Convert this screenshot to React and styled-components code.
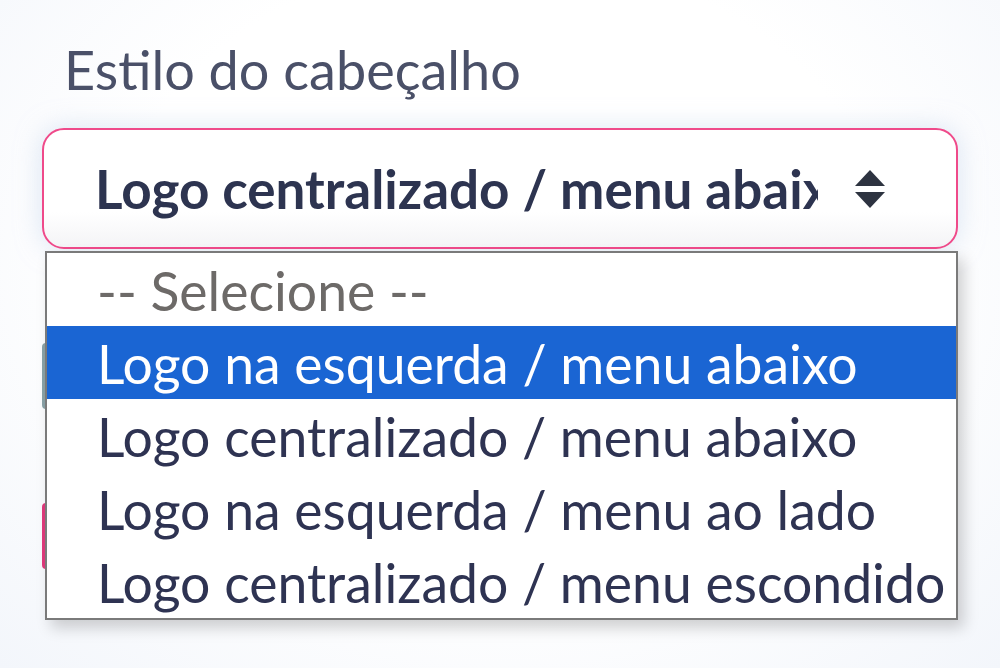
import React from "react";
import styled, { createGlobalStyle } from "styled-components";

const GlobalStyle = createGlobalStyle`
  body {
    margin: 0;
    background: #fbfcfe;
    font-family: Lato, "Open Sans", sans-serif;
  }
`;

const Page = styled.div`
  width: 1000px;
  height: 668px;
  overflow: hidden;
  padding: 30px 42px 0 42px;
  box-sizing: border-box;
  background: radial-gradient(ellipse at 50% 40%, #ffffff 55%, #f3f6fb 100%);
`;

const Label = styled.div`
  font-size: 54px;
  line-height: 80px;
  color: #4a5068;
  padding-left: 22px;
  margin-bottom: 18px;
`;

const SelectWrap = styled.div`
  position: relative;
  width: 916px;
`;

const SelectBox = styled.div`
  height: 121px;
  box-sizing: border-box;
  border: 2px solid #ef4a8a;
  border-radius: 22px;
  background: linear-gradient(#ffffff 70%, #f4f4f6 100%);
  box-shadow: 0 0 26px rgba(195, 212, 235, 0.6);
  display: flex;
  align-items: center;
  padding: 0 70px 0 51px;
  gap: 36px;
`;

const SelectValue = styled.span`
  flex: 1;
  font-size: 53px;
  font-weight: 700;
  color: #2d3450;
  white-space: nowrap;
  overflow: hidden;
`;

const Arrows = styled.svg`
  width: 32px;
  height: 44px;
  flex: none;
`;

const Dropdown = styled.ul`
  position: absolute;
  z-index: 2;
  top: 123px;
  left: 3px;
  width: 913px;
  box-sizing: border-box;
  margin: 0;
  padding: 0;
  list-style: none;
  background: #ffffff;
  border: 2px solid #7a7a7a;
  box-shadow: 6px 8px 14px rgba(0, 0, 0, 0.18);
`;

const Option = styled.li`
  height: 73px;
  display: flex;
  align-items: center;
  padding-left: 50px;
  font-size: 53.5px;
  white-space: nowrap;
  color: ${(p) => (p.active ? "#ffffff" : p.muted ? "#6d6a68" : "#2e3352")};
  background: ${(p) => (p.active ? "#1a65d3" : "transparent")};
`;

const NextField = styled.div`
  height: 66px;
  width: 900px;
  box-sizing: border-box;
  border: 3px solid ${(p) => p.color};
  border-radius: 4px;
  margin-top: ${(p) => p.top}px;
`;

const options = [
  "Logo na esquerda / menu abaixo",
  "Logo centralizado / menu abaixo",
  "Logo na esquerda / menu ao lado",
  "Logo centralizado / menu escondido",
];

export default function App() {
  return (
    <>
      <GlobalStyle />
      <Page>
        <Label>Estilo do cabeçalho</Label>
        <SelectWrap>
          <SelectBox>
            <SelectValue>Logo centralizado / menu abaixo</SelectValue>
            <Arrows viewBox="0 0 32 44">
              <path d="M16 3 L31 19 H1 Z" fill="#2d3340" />
              <path d="M1 25 H31 L16 41 Z" fill="#2d3340" />
            </Arrows>
          </SelectBox>
          <Dropdown>
            <Option muted>-- Selecione --</Option>
            {options.map((o, i) => (
              <Option key={o} active={i === 0}>
                {o}
              </Option>
            ))}
          </Dropdown>
          <NextField color="#8aa3a8" top={94} />
          <NextField color="#e23a7d" top={94} />
        </SelectWrap>
      </Page>
    </>
  );
}
